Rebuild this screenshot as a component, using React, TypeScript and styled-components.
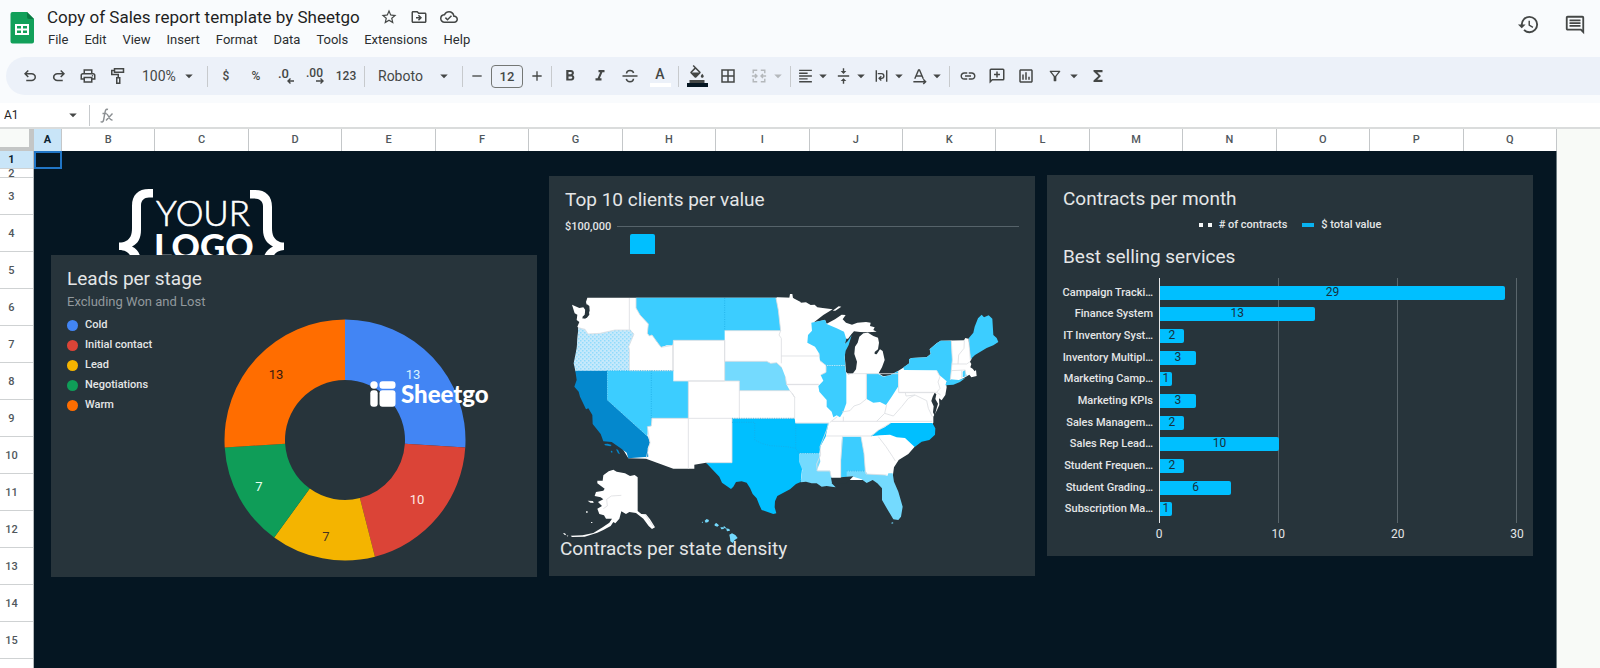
import React from "react";
import styled, { createGlobalStyle } from "styled-components";
import {
  MdStarBorder, MdOutlineDriveFileMove, MdOutlineCloudDone, MdHistory, MdOutlineComment,
  MdOutlinePrint, MdArrowDropDown, MdFormatBold, MdFormatItalic,
  MdBorderAll, MdFormatAlignLeft, MdVerticalAlignCenter, MdLink,
  MdOutlineInsertChart, MdOutlineFilterAlt, MdFunctions, MdFormatColorFill, MdAdd, MdRemove,
} from "react-icons/md";

const Global = createGlobalStyle`
  * { box-sizing: border-box; }
  html, body { margin: 0; }
  body { font-family: Roboto, "Liberation Sans", sans-serif; color: #1f1f1f; background: #f9fbfd; }
  button, input, select { font: inherit; color: inherit; }
  h1, h2, p, ul, ol { margin: 0; padding: 0; font-weight: 400; }
  ul, ol { list-style: none; }
`;

const Page = styled.div`
  display: flex;
  flex-direction: column;
  height: 100vh;
  overflow: hidden;
`;

/* ---------- header ---------- */

const Header = styled.header`
  display: flex;
  align-items: flex-start;
  height: 57px;
  flex: none;
  padding: 6px 14px 0 10px;
`;
const SheetsLogo = styled.svg`
  width: 25px;
  height: 32px;
  margin: 6px 6px 0 0;
  flex: none;
`;
const Heading = styled.div`
  flex: 1;
`;
const TitleRow = styled.div`
  display: flex;
  align-items: center;
  gap: 12px;
  height: 22px;
  padding-left: 6px;
`;
const Title = styled.h1`
  font-size: 17px;
  line-height: 22px;
  margin-right: 8px;
  white-space: nowrap;
`;
const PlainButton = styled.button`
  display: inline-flex;
  align-items: center;
  justify-content: center;
  border: 0;
  padding: 0;
  background: none;
  color: #444746;
  cursor: pointer;
`;
const Menu = styled.nav`
  display: flex;
  gap: 16px;
  padding: 2px 0 0 7px;
`;
const MenuItem = styled(PlainButton)`
  font-size: 13px;
  line-height: 20px;
  color: #2b2e30;
`;
const HeaderActions = styled.div`
  display: flex;
  gap: 24px;
  padding-top: 7px;
`;

/* ---------- toolbar ---------- */

const Toolbar = styled.div`
  display: flex;
  align-items: center;
  flex: none;
  height: 38px;
  margin: 0 0 8px 6px;
  padding-left: 9px;
  background: #ecf1f9;
  border-radius: 19px 0 0 19px;
  color: #444746;
`;
const Tool = styled(PlainButton)<{ $w?: number }>`
  width: ${(p) => p.$w ?? 30}px;
  height: 30px;
  flex: none;
  font-size: 12px;
  font-weight: 500;
`;
const DropTool = styled(PlainButton)<{ $wide?: boolean; $muted?: boolean }>`
  justify-content: flex-start;
  width: ${(p) => (p.$wide ? 43 : 38)}px;
  height: 30px;
  padding-left: ${(p) => (p.$wide ? 7 : 3)}px;
  gap: ${(p) => (p.$wide ? 2 : 0)}px;
  flex: none;
  color: ${(p) => (p.$muted ? "#b4b8bb" : "#444746")};
`;
const Caret = styled(MdArrowDropDown)`
  width: 18px;
  height: 18px;
  flex: none;
`;
const Separator = styled.span`
  width: 1px;
  height: 21px;
  margin: 0 3px;
  background: #c7cacd;
  flex: none;
`;
const SelectBox = styled.label<{ $w: number }>`
  display: grid;
  grid-template-columns: 1fr 24px;
  align-items: center;
  width: ${(p) => p.$w}px;
  flex: none;
  svg { grid-area: 1 / 2; pointer-events: none; }
`;
const Select = styled.select`
  grid-area: 1 / 1 / 2 / 3;
  appearance: none;
  width: 100%;
  border: 0;
  padding: 0 0 0 10px;
  background: none;
  font-size: 14px;
  line-height: 20px;
`;
const SizeInput = styled.input`
  width: 32px;
  height: 23px;
  margin: 0 3px;
  padding: 0;
  border: 1px solid #747775;
  border-radius: 4px;
  background: none;
  text-align: center;
  font-size: 13px;
  font-weight: 500;
  flex: none;
`;
const Underlined = styled.span<{ $bar: string }>`
  display: flex;
  flex-direction: column;
  align-items: center;
  justify-content: flex-end;
  width: 21px;
  height: 22px;
  font-size: 14px;
  line-height: 18px;
  border-bottom: 4px solid ${(p) => p.$bar};
`;

/* ---------- formula bar ---------- */

const FormulaBar = styled.div`
  display: flex;
  align-items: center;
  flex: none;
  height: 26px;
  background: #fff;
  border-bottom: 2px solid #dadcdc;
`;
const NameInput = styled.input`
  width: 60px;
  border: 0;
  padding: 0 0 0 4px;
  background: none;
  font-size: 12px;
  line-height: 16px;
`;
const FormulaInput = styled.input`
  flex: 1;
  border: 0;
  background: none;
  font-size: 13px;
`;
const NameCaret = styled(PlainButton)`
  width: 26px;
`;
const Fx = styled.svg`
  width: 14px;
  height: 15px;
  margin-left: 7px;
`;

/* ---------- grid ---------- */

const ColumnHeads = styled.div`
  display: grid;
  grid-template-columns: 34px 28px repeat(16, 1fr) 43px;
  flex: none;
  height: 22px;
  background: #fff;
`;
const Corner = styled.div`
  background: #f8faf8;
  border-right: 5px solid #c4c6c6;
  border-bottom: 4px solid #c4c6c6;
`;
const ColumnHead = styled.div<{ $active?: boolean }>`
  display: flex;
  align-items: center;
  justify-content: center;
  padding-bottom: 2px;
  border-right: 1px solid #c4c7c9;
  background: ${(p) => (p.$active ? "#c9e5f8" : "#fff")};
  color: ${(p) => (p.$active ? "#0b2230" : "#50575c")};
  font-size: 11px;
  font-weight: ${(p) => (p.$active ? 700 : 500)};
`;
const OffGrid = styled.div`
  background: #f8faf7;
`;
const SheetBody = styled.main`
  display: grid;
  grid-template-columns: 34px 1fr 43px;
  flex: 1;
  min-height: 0;
`;
const RowHeads = styled.ol`
  background: #fff;
  border-right: 1px solid #b5babd;
  overflow: hidden;
`;
const RowHead = styled.li<{ $h: number; $active?: boolean }>`
  display: flex;
  align-items: center;
  height: ${(p) => p.$h}px;
  overflow: hidden;
  border-bottom: 1px solid #cfd2d3;
  background: ${(p) => (p.$active ? "#c9e5f8" : "#fff")};
  color: ${(p) => (p.$active ? "#0b2230" : "#50575c")};
  font-size: 11px;
  line-height: 11px;
  font-weight: ${(p) => (p.$active ? 700 : 500)};
  span { width: 23px; text-align: center; }
`;
const Canvas = styled.div`
  position: relative;
  display: grid;
  grid-template-columns: repeat(3, minmax(0, 1fr));
  align-items: start;
  gap: 12px;
  padding: 0 23px 0 17px;
  background: #051622;
  border-right: 1px solid #6d7b80;
  overflow: hidden;
`;
const ActiveCell = styled.div`
  position: absolute;
  top: 0;
  left: 0;
  width: 28px;
  height: 18px;
  border: 2px solid #2176c7;
`;

/* ---------- cards ---------- */

const Card = styled.section<{ $top?: number; $bottom: number }>`
  position: relative;
  margin-top: ${(p) => p.$top ?? 0}px;
  padding: 13px 16px ${(p) => p.$bottom}px;
  background: #27343b;
  color: #e4e6e7;
`;
const CardTitle = styled.h2`
  font-size: 19px;
  line-height: 22px;
  white-space: nowrap;
`;
const Subtitle = styled.p`
  font-size: 13px;
  line-height: 24px;
  color: #92999d;
`;
const LogoArea = styled.div`
  height: 104px;
  padding: 38px 0 0 68px;
  overflow: hidden;
`;
const StageBody = styled.div`
  display: grid;
  grid-template-columns: 157px 1fr;
`;
const StageLegend = styled.ul`
  display: flex;
  flex-direction: column;
  padding-top: 1px;
`;
const StageItem = styled.li<{ $color: string }>`
  display: flex;
  align-items: center;
  gap: 7px;
  font-size: 11px;
  font-weight: 500;
  line-height: 20px;
  &::before {
    content: "";
    width: 11px;
    height: 11px;
    border-radius: 50%;
    background: ${(p) => p.$color};
  }
`;
const Donut = styled.svg`
  width: 242px;
  height: 242px;
  margin-top: 5px;
  font-size: 13px;
`;
const Watermark = styled.div`
  position: absolute;
  left: 319px;
  top: 124px;
  display: flex;
  align-items: center;
  gap: 5px;
  height: 29px;
  color: #fff;
  font-family: Lato, sans-serif;
  font-size: 24px;
  line-height: 28px;
  font-weight: 900;
`;
const GridLabel = styled.div`
  display: flex;
  align-items: center;
  gap: 6px;
  height: 14px;
  margin: 8px 0 1px;
  font-size: 11px;
  font-weight: 500;
  &::after {
    content: "";
    flex: 1;
    height: 1px;
    background: #56636a;
  }
`;
const ClientBar = styled.div`
  width: 25px;
  height: 20px;
  margin: 0 0 26px 65px;
  background: #00bfff;
  border-radius: 2px 2px 0 0;
`;
const MapArea = styled.div`
  margin: 0 -16px;
  svg { display: block; width: 100%; overflow: visible; }
`;
const MapTitle = styled(CardTitle)`
  position: relative;
  margin-left: -5px;
`;
const SeriesLegend = styled.ul`
  display: flex;
  justify-content: center;
  gap: 15px;
  margin: 7px 0 13px;
  font-size: 11px;
  font-weight: 500;
  line-height: 16px;
`;
const SeriesItem = styled.li`
  display: flex;
  align-items: center;
  gap: 7px;
`;
const Dots = styled.span`
  width: 13px;
  height: 4px;
  border: solid #f5f7f7;
  border-width: 0 4px;
`;
const Dash = styled.span`
  width: 12px;
  height: 4px;
  background: #08b2f0;
`;
const BarChart = styled.div`
  display: grid;
  grid-template-columns: 96px 1fr;
  margin-top: 10px;
`;
const Plot = styled.div`
  position: relative;
  grid-area: 1 / 2;
  border-left: 1px solid #e4e6e7;
`;
const GridLines = styled.div`
  position: absolute;
  inset: 0;
  display: grid;
  grid-template-columns: repeat(3, 1fr);
  span { border-right: 1px solid #5a666c; }
`;
const BarRows = styled.ul`
  position: relative;
  display: grid;
  grid-template-columns: 100%;
  grid-template-rows: repeat(11, 1fr);
  height: 245px;
  padding: 4px 0 3px;
`;
const BarRow = styled.li`
  display: flex;
  align-items: center;
`;
const BarFill = styled.div`
  height: 14px;
  background: #00bfff;
  border-radius: 0 2px 2px 0;
  color: #16303d;
  font-size: 12px;
  line-height: 13px;
  text-align: center;
`;
const LabelRow = styled.li`
  display: flex;
  align-items: center;
  justify-content: flex-end;
  padding-right: 6px;
  font-size: 11px;
  font-weight: 500;
  line-height: 14px;
  white-space: nowrap;
`;
const Axis = styled.div`
  grid-area: 2 / 2;
  display: flex;
  justify-content: space-between;
  margin: 3px -20px 0;
  font-size: 12px;
  line-height: 16px;
  span { width: 40px; text-align: center; }
`;

/* ---------- data ---------- */

const columns = "BCDEFGHIJKLMNOPQ".split("");
const menus = ["File", "Edit", "View", "Insert", "Format", "Data", "Tools", "Extensions", "Help"];
const stages = [
  { name: "Cold", value: 13, color: "#4285f4", ink: "#d8f2ff", x: 189, y: 55 },
  { name: "Initial contact", value: 10, color: "#db4437", ink: "#ffe9e4", x: 193, y: 180 },
  { name: "Lead", value: 7, color: "#f4b400", ink: "#4a3520", x: 102, y: 217 },
  { name: "Negotiations", value: 7, color: "#0f9d58", ink: "#e8fff2", x: 35, y: 167 },
  { name: "Warm", value: 13, color: "#ff6d00", ink: "#3a1a10", x: 52, y: 55 },
];
const services: [string, number][] = [
  ["Campaign Tracki…", 29], ["Finance System", 13], ["IT Inventory Syst…", 2],
  ["Inventory Multipl…", 3], ["Marketing Camp…", 1], ["Marketing KPIs", 3],
  ["Sales Managem…", 2], ["Sales Rep Lead…", 10], ["Student Frequen…", 2],
  ["Student Grading…", 6], ["Subscription Ma…", 1],
];

function slicePath(from: number, to: number) {
  const at = (t: number, r: number) => {
    const a = t * 2 * Math.PI;
    return `${121 + r * Math.sin(a)} ${121 - r * Math.cos(a)}`;
  };
  return `M${at(from, 120.5)}A120.5 120.5 0 0 1 ${at(to, 120.5)}L${at(to, 60)}A60 60 0 0 0 ${at(from, 60)}Z`;
}

function StageDonut() {
  let sum = 0;
  return (
    <Donut viewBox="0 0 242 242" role="img" aria-label="Leads per stage">
      {stages.map((s) => {
        const from = sum / 50;
        sum += s.value;
        return <path key={s.name} d={slicePath(from, sum / 50)} fill={s.color} />;
      })}
      {stages.map((s) => (
        <text key={s.name} x={s.x} y={s.y} dy="5" textAnchor="middle" fill={s.ink}>{s.value}</text>
      ))}
    </Donut>
  );
}

function BraceLogo() {
  return (
    <svg width="166" height="78" viewBox="119 189 166 78" role="img" aria-label="Your logo">
      <g fill="#fff">
        <path d="M153 189v8.500h-4c-5 0-8 3-8 8v24c0 9-3 14-9 17 6 3 9 8 9 17v10h-9v-9c0-7-2-11-6-13-2-1-4-1.500-7-1.500v-7.500c3 0 5-.5 7-1.500 4-2 6-6 6-13v-22c0-11 6-17 17-17z" />
        <path d="M250 190v8.500h4c6 0 9 3 9 8v23c0 9 4 14 10 17-6 3-10 8-10 17v10h9v-9c0-7 2-11 6-13 2-1 4-1.500 6-1.500v-7.500c-3 0-4-.5-6-1.500-4-2-6-6-6-13v-21c0-11-6-17-17-17z" />
        <text x="156" y="226" fontFamily="Lato, sans-serif" fontSize="35" fontWeight="300" stroke="#fff" strokeWidth="0.600">YOUR</text>
        <text x="154" y="259" fontFamily="Lato, sans-serif" fontSize="35" fontWeight="900">LOGO</text>
      </g>
    </svg>
  );
}

const SKY = "#3ccdff";
const DEEP = "#00bfff";
const PALE = "#74dafe";

/* Lower 48 states drawn in three overlapping regions, then Alaska and Hawaii. */
function StatesMap() {
  return (
    <svg viewBox="-33 0 1458 774" role="img" aria-label="Contracts per state density">
      <defs>
        <pattern id="stipple" width="12" height="12" patternUnits="userSpaceOnUse">
          <rect width="12" height="12" fill="#c6e9fb" />
          <rect x="1" y="1" width="3" height="3" fill="#4fcbfb" />
          <rect x="7" y="7" width="3" height="3" fill="#4fcbfb" />
        </pattern>
      </defs>
      <g fill="#fff">
        <path d="M36 74L58 84L70 82L76 90L74 104L66 112L80 114L88 104L86 86L80 74L78 66L82 53L688 53L690 42L697 42L699 54L722 66V440L704 560L438 548L403 554V566H340L258 536L205 535L46 272L55 143L52 140L58 126L50 120L52 104L44 100Z" />
        <g transform="translate(660 0)">
          <path d="M-10 52L38 54L50 63L62 68L78 67L92 75L104 74L112 82L128 84L158 88L130 105L102 127L135 120L140 131L165 118L185 104L197 105L188 118L198 128L216 134L232 128L258 126L272 128L270 138L284 142L280 150L290 155L262 157L240 156L222 154L214 163L204 176L196 176L194 225L198 275L204 283L218 281L228 268L231 245L223 222L225 200L233 188L238 170L250 160L264 158L280 168L294 173L297 188L294 208L284 216L284 222L290 223L300 208L308 213L314 240L306 262L296 280L310 289L330 286L354 273L372 262L388 250L387 238L395 234L440 232L452 222L449 208L470 190L482 182L552 181L556 174L565 176L575 236L570 245L574 252L571 262L578 266L584 274L588 270L590 288L574 292L568 284L558 290L540 300L510 306L498 308L500 322L496 345L485 361L477 355L478 375L470 392L460 410L460 428L404 500L385 522L356 540L342 562L338 590L250 600L40 600L-10 440Z" />
          <path d="M158 92L176 79L184 80L166 92Z" />
        </g>
        <path d="M720 500H1000L996 584L975 588L910 575L850 590L812 596L760 570Z" />
      </g>
      <path fill="#27343b" d="M80 72l8 6 1 14-5 14-8 10-10-1 9-9 1-16z M1118 350l6-12 5 5-3 14 8 14-4 14-6 22-5-10 2-18-7-16z" />
      <path fill="url(#stipple)" d="M55 143L75 148L84 162L120 160L165 150H212L222 162L206 200L208 208V272H46L41 250L50 205Z" />
      <path fill="#0488cd" d="M46 272H142V360L264 470L270 488L263 505L265 530L205 535L200 518L182 505L155 486L130 484L122 462L98 432L97 405L85 385L78 388L60 350L56 335L43 320L50 300Z" />
      <path fill={SKY} d="M142 272H340V303H385V415H276L274 438L264 440L262 468L142 360ZM228 53H648L655 90L662 152H494V181H340L338 196L320 196L303 202L290 185L276 165L268 168L262 160L265 132L240 105L228 84Z" />
      <path fill={PALE} d="M494 244H620L632 250L650 248L665 262L676 290L680 314L690 332H538V303H494Z" />
      <path fill={DEEP} d="M516 415H704L706 430H806L800 455L797 470L782 498L778 520H717L718 540L727 558L722 606L708 612L690 628L652 648L645 664L644 682L649 700L640 702L605 690L598 675L590 655L578 642L570 624L560 608L545 604L528 606L520 620L513 627L486 608L478 590L438 548H516Z" />
      <g transform="translate(660 0)" fill={SKY}>
        <path d="M94 128L135 119L140 132L170 145L192 155L199 178L194 192L203 184L215 166L206 195L197 212L194 230L196 256H138L120 242L117 220L105 200L82 188L84 165L96 152Z" />
        <path d="M138 257H195L199 285V370L190 395L180 412L170 406L160 412L155 395L140 380V360L118 335L115 318L130 302L122 285L138 277Z" />
        <path d="M260 281H294L310 290L330 286L354 273V320L335 350L318 375L300 366L280 368L260 357Z" />
        <path d="M372 270L370 262L388 250L387 238L395 234L440 232L452 222L449 208L470 190L482 182H513L517 240L511 298L536 300L556 294L540 306L520 314L496 316L500 304L478 285L470 271Z" />
        <path d="M566 175L580 158L584 140L594 115L605 104L612 112L626 106L637 116L640 165L650 174L655 186L640 196L620 204L600 216L585 225L572 238Z" />
        <path d="M548 275L555 270L560 288L548 292Z" />
        <path d="M186 470H243L252 520L256 573H205L200 596L183 592V540Z" />
        <path fill={DEEP} d="M332 429H457L466 445L465 464L448 480L425 485L404 501L375 474L350 472L330 464L300 466L272 469L296 450L314 442Z" />
      </g>
      <g transform="translate(360 420)" fill={PALE}>
        <path d="M357 100H418L421 125L410 152H450L454 172L460 180L455 190L467 202L455 200L440 198L425 200L410 190L395 190L378 185L362 187L367 150L357 125Z" />
        <path d="M500 152H556L562 162L615 165L622 168L625 160H638L642 185L655 215L668 260L663 290L655 300L640 298L632 284L622 268L606 240V205L592 190L578 180L560 189L545 178L520 170L500 171Z" />
        <path d="M634 308l5-1 1 3-5 1z" />
        <path fill="#27343b" d="M453 173H482V172L520 169L500 190L456 190z" />
      </g>
      <path fill="#0488cd" d="M133 492l10-1 12 4-4 4-16-3zM152 513l4-1 2 5-4 1zM168 508l6 1 6 14-6-3z" />

      <g fill="none" stroke="#dcdee2" strokeWidth="2.500">
        <path d="M55 143L75 148L84 162L120 160L165 150H212M208 54V150M212 152L222 162L206 200L208 208V272M228 54V84L240 105L265 132L262 160L268 168L276 165L303 202L338 196V272M340 272V181H494V303H340M208 272H340M494 152H662M494 181V244H620L632 250L650 248L665 262M662 152L657 165L664 175V250M664 228H776M676 290L680 314H776M538 332H690M690 332L704 352V415M385 303H538V415M274 415H704M385 303V566M516 415V548H438M704 352L697 340M705 429H808M648 54L655 90L662 152M276 415L274 438L262 440L270 488L258 536" />
        <g transform="translate(660 0)">
          <path d="M118 230L117 220M120 242L138 257L138 277L122 285M116 313H20M199 281H354M259 281V357L240 372L222 378L210 392L186 396M155 424H457M138 468H275M145 430L140 450L120 500L122 525L110 552L112 573H150L153 590M188 470L182 540V592M190 424V410M243 470L252 520L256 573L258 582L320 585M295 470L318 500L338 530L346 543M290 424L314 400L320 374M314 400L340 408L365 380L385 355L405 345L378 348L376 338H356M356 273V337H470L482 345M376 338H460M405 345L440 362L445 385L457 410M470 271L480 290L474 306L480 325L470 337M275 468L296 450L332 429M514 182L517 240L511 300M534 252L536 225L552 205L553 181M515 252L560 252L570 245M514 272L556 270V290M545 272V296M566 176L571 240M150 427L172 410" />
        </g>
      </g>
      <g fill="none" stroke="#1aa9e2" strokeWidth="2" strokeDasharray="3 4">
        <path d="M494 54V152M142 272H340M142 272V360L262 468M274 272V415M516 427H584V480L605 490L630 497L680 500L707 505M707 430V505L717 520M798 257H856M516 415H704M717 520H778M860 573H916" />
      </g>

      <g transform="translate(-30 480)">
        <path fill="#fff" d="M190 89L200 95L225 100L240 108L254 105L263 112V213L274 222L288 223L300 238L315 262L306 267L296 258L280 236L258 219L238 216L228 222L214 214L208 236L196 250L190 246L182 258L160 270L142 278L104 290L66 291L62 287L98 286L130 279L158 262L178 248L186 236L168 236L162 226L148 222L142 206L156 198L144 186L160 178L152 172L134 168L138 156L160 152L164 146L142 130V122L158 122L160 106L176 94Z" />
        <path fill="none" stroke="#d5d7da" strokeWidth="2" d="M160 206L172 198L170 178L184 168L214 166M286 224L310 260" />
        <path fill="#f1f2f2" d="M113 182l16 1 2 6-10-1zM108 214h5v4h-5zM123 246h4v3h-4zM39 279l6 1 4 6-6-2zM50 286l5 1-2 3z" />
        <path fill={PALE} d="M464 242l6-5 7 3-2 6-8 2zM455 246l4-1-1 5zM494 252l5-3 8 7-5 4-8-3zM511 262h9l2 5-8 1zM522 258l6 5-2 3-6-4zM528 265l10 2 2 5-9 2zM538 284l8-4 10 5 7 9-9 6-6 9-7-5-1-10z" />
      </g>
    </svg>
  );
}

type SymbolProps = { d: string };
const Symbol = ({ d }: SymbolProps) => (
  <svg width="18" height="18" viewBox="0 -960 960 960" fill="currentColor"><path d={d} /></svg>
);
const UNDO = "M280-200v-80h284q63 0 109.500-40T720-420q0-60-46.500-100T564-560H312l104 104-56 56-200-200 200-200 56 56-104 104h252q97 0 169.500 63T800-420q0 94-72.500 157T564-200H280Z";
const REDO = "M396-200q-97 0-169.500-63T154-420q0-94 72.500-157T396-640h252L544-744l56-56 200 200-200 200-56-56 104-104H396q-63 0-109.500 40T240-420q0 60 46.500 100T396-280h284v80H396Z";

function ToolbarRow() {
  return (
    <Toolbar role="toolbar" aria-label="Formatting">
      <Tool $w={29} aria-label="Undo"><Symbol d={UNDO} /></Tool>
      <Tool $w={29} aria-label="Redo"><Symbol d={REDO} /></Tool>
      <Tool $w={30} aria-label="Print"><MdOutlinePrint size={18} /></Tool>
      <Tool $w={29} aria-label="Paint format">
        <svg width="18" height="18" viewBox="0 0 18 18" fill="none" stroke="currentColor" strokeWidth="1.500">
          <path d="M5.500 1.750h9v3.500h-9zM5.500 3.500H2.750v4h6.500v3M7.750 10.750h3v5.500h-3z" />
        </svg>
      </Tool>
      <SelectBox $w={72}>
        <Select aria-label="Zoom" defaultValue="100%"><option>100%</option></Select>
        <Caret />
      </SelectBox>
      <Separator />
      <Tool aria-label="Format as currency">$</Tool>
      <Tool aria-label="Format as percent">%</Tool>
      <Tool aria-label="Decrease decimal places">
        <svg width="18" height="18" viewBox="0 0 18 18" fill="none" stroke="currentColor" strokeWidth="1.400">
          <text x="1" y="11" fontSize="13" fill="currentColor" stroke="none">.0</text>
          <path d="M17 14h-6M13.500 11.500L11 14l2.500 2.500" />
        </svg>
      </Tool>
      <Tool aria-label="Increase decimal places">
        <svg width="20" height="18" viewBox="0 0 20 18" fill="none" stroke="currentColor" strokeWidth="1.400">
          <text x="0" y="10" fontSize="12" fill="currentColor" stroke="none">.00</text>
          <path d="M10 14h7M14.500 11.500L17 14l-2.500 2.500" />
        </svg>
      </Tool>
      <Tool aria-label="More formats">123</Tool>
      <Separator />
      <SelectBox $w={91}>
        <Select aria-label="Font" defaultValue="Roboto"><option>Roboto</option></Select>
        <Caret />
      </SelectBox>
      <Separator />
      <Tool $w={22} aria-label="Decrease font size"><MdRemove size={16} /></Tool>
      <SizeInput aria-label="Font size" defaultValue="12" />
      <Tool $w={22} aria-label="Increase font size"><MdAdd size={16} /></Tool>
      <Separator />
      <Tool aria-label="Bold"><MdFormatBold size={18} /></Tool>
      <Tool aria-label="Italic"><MdFormatItalic size={18} /></Tool>
      <Tool aria-label="Strikethrough">
        <svg width="18" height="18" viewBox="0 0 18 18" fill="none" stroke="currentColor" strokeWidth="1.500">
          <path d="M1.500 9h15M5.500 6.500C5.700 4.500 7.100 3.500 9 3.500s3.200.8 3.600 2.500M5.300 11.800c.4 1.900 1.800 2.900 3.700 2.900s3.400-1.100 3.500-3" />
        </svg>
      </Tool>
      <Tool aria-label="Text color"><Underlined $bar="#fff">A</Underlined></Tool>
      <Separator />
      <Tool aria-label="Fill color">
        <Underlined $bar="#051622"><MdFormatColorFill size={18} /></Underlined>
      </Tool>
      <Tool $w={32} aria-label="Borders"><MdBorderAll size={18} /></Tool>
      <DropTool $wide $muted aria-label="Merge cells">
        <svg width="18" height="18" viewBox="0 0 18 18" fill="none" stroke="currentColor" strokeWidth="1.600">
          <path d="M7 2.500H2.500V6M11 2.500h4.500V6M7 15.500H2.500V12M11 15.500h4.500V12M1 9h5.500M17 9h-5.500M4.500 6.800L6.700 9l-2.200 2.200M13.500 6.800L11.300 9l2.200 2.200" />
        </svg>
        <Caret />
      </DropTool>
      <Separator />
      <DropTool aria-label="Horizontal align"><MdFormatAlignLeft size={18} /><Caret /></DropTool>
      <DropTool aria-label="Vertical align"><MdVerticalAlignCenter size={18} /><Caret /></DropTool>
      <DropTool aria-label="Text wrapping">
        <svg width="18" height="18" viewBox="0 0 18 18" fill="none" stroke="currentColor" strokeWidth="1.500">
          <path d="M3.500 3v12M14.500 3v12M5 6.500h4a2.500 2.500 0 0 1 0 5H7M8.800 9.200L6.500 11.500l2.300 2.300" />
        </svg>
        <Caret />
      </DropTool>
      <DropTool aria-label="Text rotation">
        <svg width="18" height="18" viewBox="0 0 18 18" fill="none" stroke="currentColor" strokeWidth="1.500">
          <path d="M4 12L8 2.500h1l4 9.500M5.300 9h6.400M2.500 15H15M13 12.500l2.500 2.500-2.500 2.500" />
        </svg>
        <Caret />
      </DropTool>
      <Separator />
      <Tool $w={29} aria-label="Insert link"><MdLink size={18} /></Tool>
      <Tool $w={29} aria-label="Insert comment">
        <svg width="18" height="18" viewBox="0 0 24 24" fill="currentColor">
          <path d="M2 22V4a2 2 0 0 1 2-2h16a2 2 0 0 1 2 2v12a2 2 0 0 1-2 2H6zM4 17.200L5.200 16H20V4H4zM11 14h2v-3h3V9h-3V6h-2v3H8v2h3z" />
        </svg>
      </Tool>
      <Tool $w={29} aria-label="Insert chart"><MdOutlineInsertChart size={18} /></Tool>
      <DropTool $wide aria-label="Create a filter"><MdOutlineFilterAlt size={18} /><Caret /></DropTool>
      <Tool $w={29} aria-label="Functions"><MdFunctions size={18} /></Tool>
    </Toolbar>
  );
}

function ServicesChart() {
  return (
    <BarChart>
      <BarRows>
        {services.map(([name]) => <LabelRow key={name}>{name}</LabelRow>)}
      </BarRows>
      <Plot>
        <GridLines><span /><span /><span /></GridLines>
        <BarRows>
          {services.map(([name, value]) => (
            <BarRow key={name}>
              <BarFill style={{ width: `${(value / 30) * 100}%` }}>{value}</BarFill>
            </BarRow>
          ))}
        </BarRows>
      </Plot>
      <Axis><span>0</span><span>10</span><span>20</span><span>30</span></Axis>
    </BarChart>
  );
}

export default function App() {
  return (
    <Page>
      <Global />
      <Header>
        <SheetsLogo viewBox="0 0 25 32" aria-hidden="true">
          <path fill="#12a05a" d="M2.500 0H17l7 7v22.500a2 2 0 0 1-2 2H2.500a2 2 0 0 1-2-2V2a2 2 0 0 1 2-2z" />
          <path fill="#0b7a43" d="M17 0l7 7h-5a2 2 0 0 1-2-2z" />
          <path fill="#fff" fillRule="evenodd" d="M5 12h14v11H5zM7 14v2.500h4V14zM13 14v2.500h4V14zM7 18.500V21h4v-2.500zM13 18.500V21h4v-2.500z" />
        </SheetsLogo>
        <Heading>
          <TitleRow>
            <Title>Copy of Sales report template by Sheetgo</Title>
            <PlainButton aria-label="Star"><MdStarBorder size={18} /></PlainButton>
            <PlainButton aria-label="Move"><MdOutlineDriveFileMove size={18} /></PlainButton>
            <PlainButton aria-label="Document status"><MdOutlineCloudDone size={18} /></PlainButton>
          </TitleRow>
          <Menu>{menus.map((m) => <MenuItem key={m}>{m}</MenuItem>)}</Menu>
        </Heading>
        <HeaderActions>
          <PlainButton aria-label="Version history"><MdHistory size={23} /></PlainButton>
          <PlainButton aria-label="Comments"><MdOutlineComment size={22} /></PlainButton>
        </HeaderActions>
      </Header>
      <ToolbarRow />
      <FormulaBar>
        <NameInput aria-label="Name box" defaultValue="A1" />
        <NameCaret aria-label="Named ranges"><Caret /></NameCaret>
        <Separator />
        <Fx viewBox="0 0 14 15" fill="none" stroke="#8b8f92" strokeWidth="1.400" aria-hidden="true">
          <path d="M8 1.500C5.500.5 5.200 3 4.800 5.500L3.600 12c-.4 2-1.500 2.200-3 1.700M2.500 5.500h4M6.500 6c2 0 2.500 6.500 6 6M12.500 5.500L6 12.500" />
        </Fx>
        <FormulaInput aria-label="Formula" />
      </FormulaBar>
      <ColumnHeads>
        <Corner />
        <ColumnHead $active>A</ColumnHead>
        {columns.map((c) => <ColumnHead key={c}>{c}</ColumnHead>)}
        <OffGrid />
      </ColumnHeads>
      <SheetBody>
        <RowHeads>
          <RowHead $h={18} $active><span>1</span></RowHead>
          <RowHead $h={9}><span>2</span></RowHead>
          {Array.from({ length: 14 }, (_, i) => (
            <RowHead key={i} $h={37}><span>{i + 3}</span></RowHead>
          ))}
        </RowHeads>
        <Canvas>
          <ActiveCell />
          <div>
            <LogoArea><BraceLogo /></LogoArea>
            <Card $bottom={16}>
              <CardTitle>Leads per stage</CardTitle>
              <Subtitle>Excluding Won and Lost</Subtitle>
              <StageBody>
                <StageLegend>
                  {stages.map((s) => <StageItem key={s.name} $color={s.color}>{s.name}</StageItem>)}
                </StageLegend>
                <StageDonut />
              </StageBody>
              <Watermark>
                <svg width="26" height="26" viewBox="0 0 26 26" fill="#fff" aria-hidden="true">
                  <circle cx="4" cy="4" r="3.700" />
                  <rect x="9.500" y="0.300" width="16" height="7.400" rx="3" />
                  <rect x="0.300" y="9.300" width="7.400" height="16.400" rx="3" />
                  <rect x="9.500" y="9.300" width="16" height="16.400" rx="3" />
                </svg>
                Sheetgo
              </Watermark>
            </Card>
          </div>
          <Card $top={25} $bottom={16}>
            <CardTitle>Top 10 clients per value</CardTitle>
            <GridLabel>$100,000</GridLabel>
            <ClientBar />
            <MapArea><StatesMap /></MapArea>
            <MapTitle>Contracts per state density</MapTitle>
          </Card>
          <Card $top={24} $bottom={14}>
            <CardTitle>Contracts per month</CardTitle>
            <SeriesLegend>
              <SeriesItem><Dots /># of contracts</SeriesItem>
              <SeriesItem><Dash />$ total value</SeriesItem>
            </SeriesLegend>
            <CardTitle>Best selling services</CardTitle>
            <ServicesChart />
          </Card>
        </Canvas>
        <OffGrid />
      </SheetBody>
    </Page>
  );
}
